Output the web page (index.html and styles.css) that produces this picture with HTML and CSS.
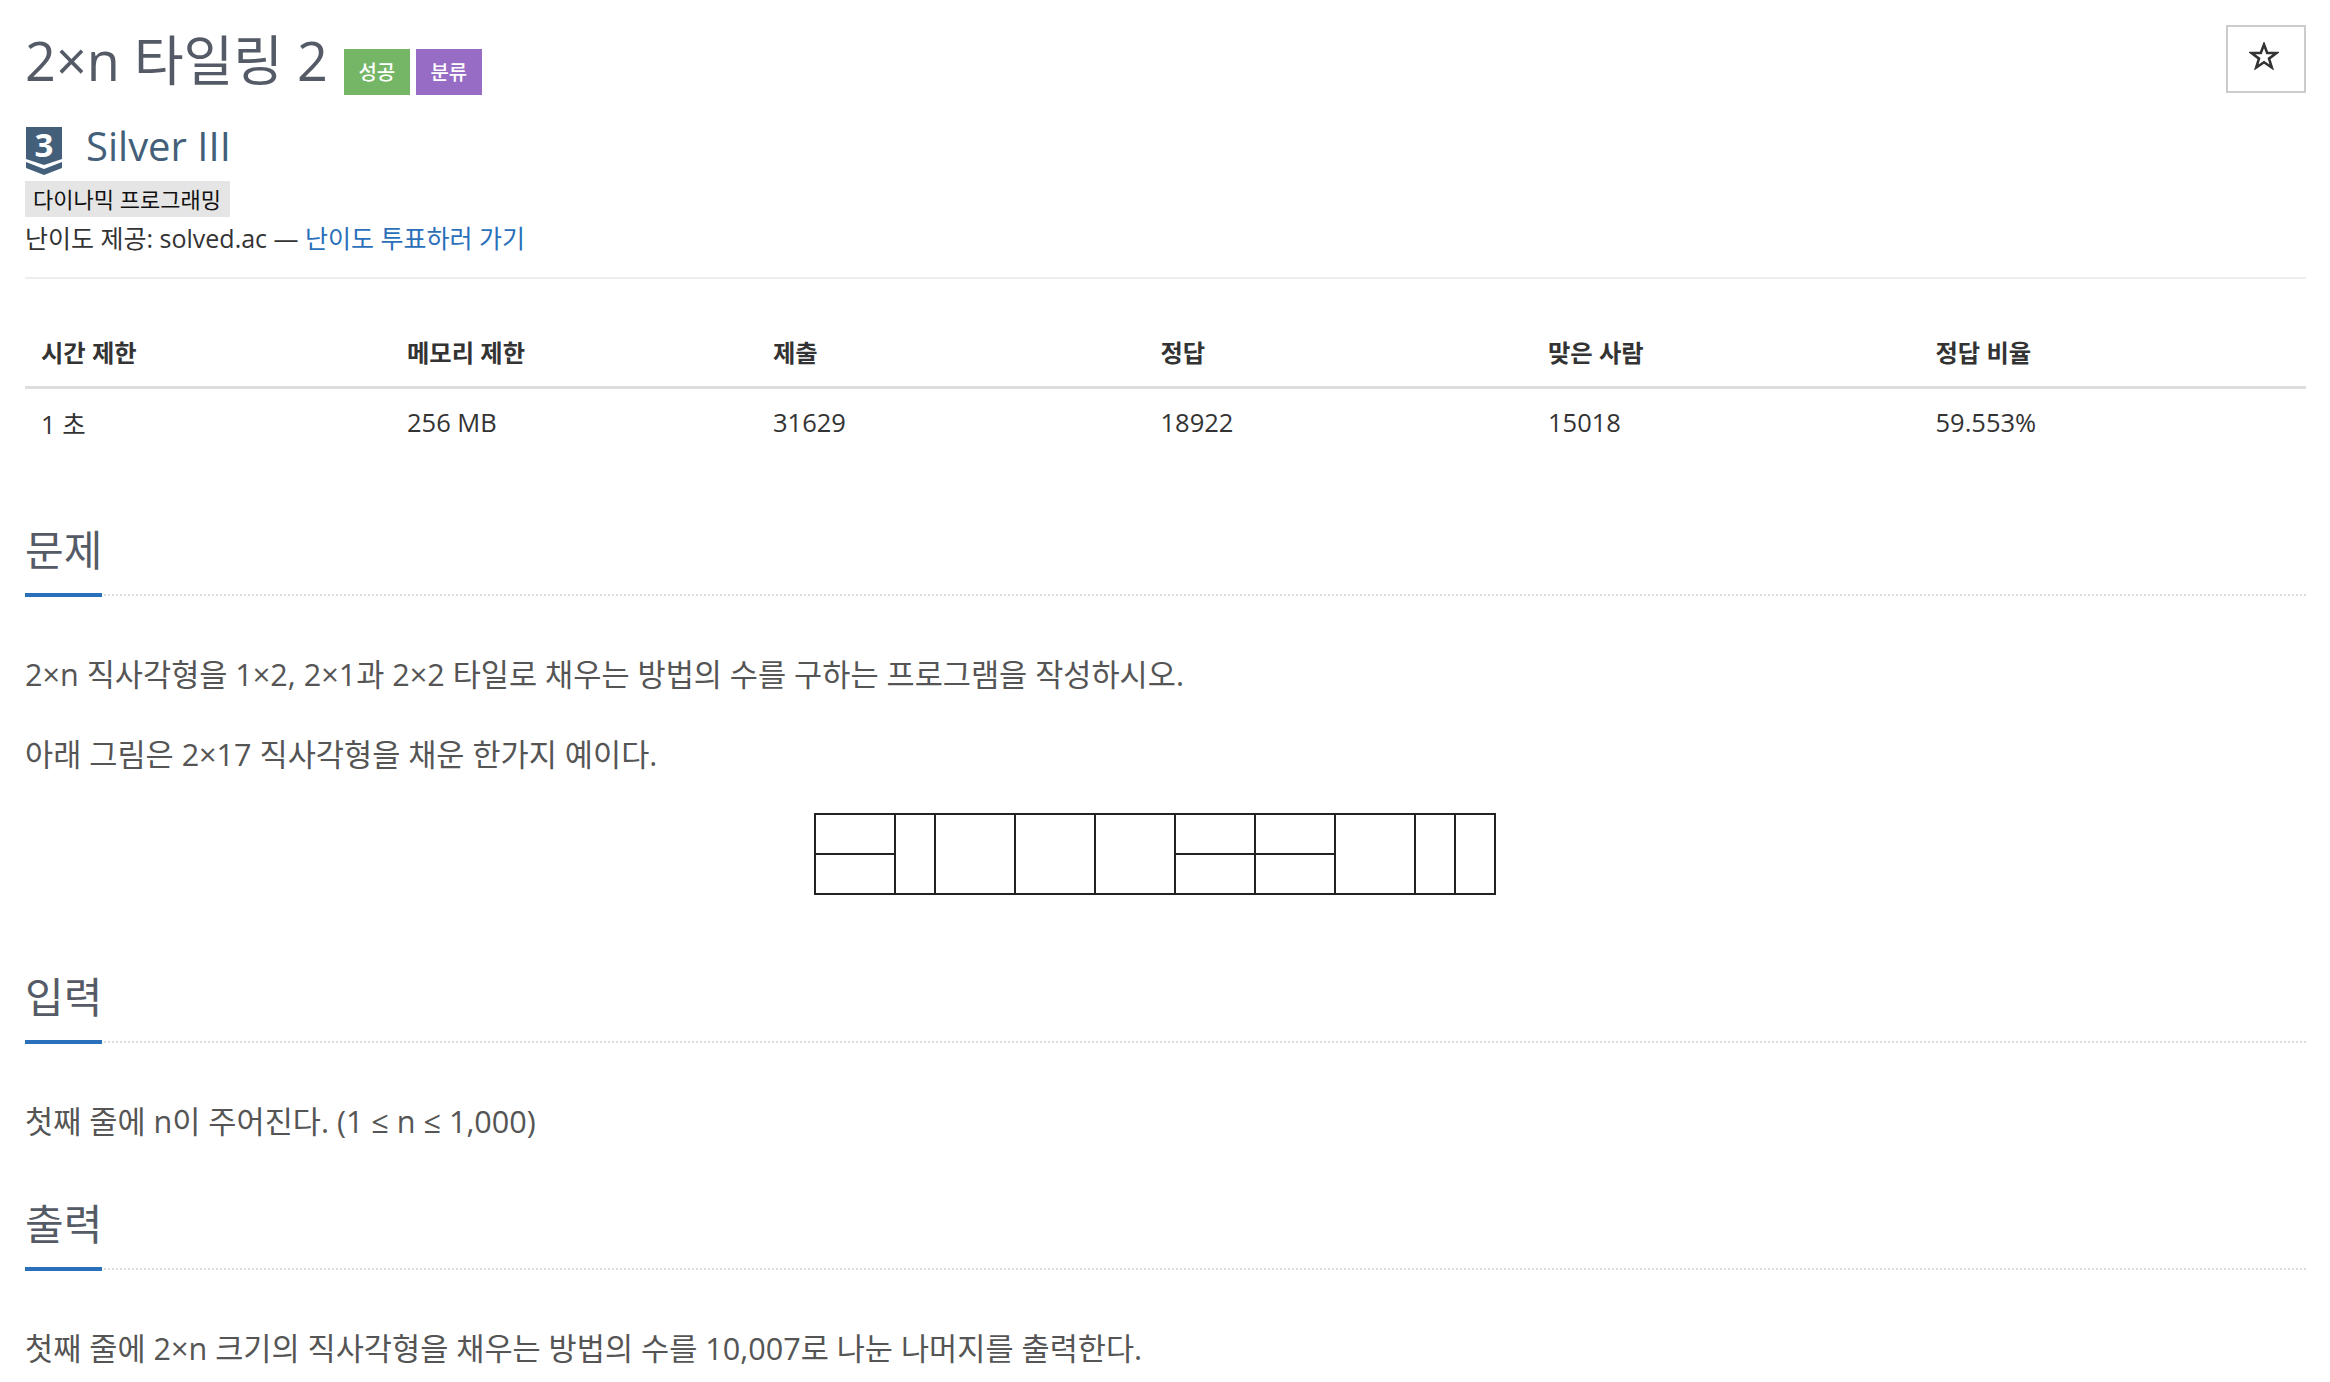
FILE: index.html
```html
<!DOCTYPE html>
<html lang="ko">
<head>
    <meta charset="UTF-8">
    <title>2×n 타일링 2</title>
    <link rel="stylesheet" href="styles.css">
</head>
<body>

<div class="container">
    <div class="page-header">
        <h1>2×n 타일링 2<span class="label label-green">성공</span><span class="label label-purple">분류</span></h1>
        <button class="star-button" type="button" aria-label="즐겨찾기">
            <svg width="30" height="28" viewBox="0 0 30 28">
                <polygon points="15,2.5 18.2,11 27.5,11 20,16.6 22.8,25.5 15,20.2 7.2,25.5 10,16.6 2.5,11 11.8,11" fill="none" stroke="#333" stroke-width="2.6"/>
            </svg>
        </button>
    </div>

    <div class="tier">
        <svg class="tier-icon" width="38" height="50" viewBox="0 0 38 50">
            <path d="M1 0H37V32L19 38L1 32Z" fill="#435f7a"/>
            <path d="M1 35L19 42L37 35V41L19 48L1 41Z" fill="#435f7a"/>
            <text x="19" y="30" text-anchor="middle">3</text>
        </svg>
        <span class="tier-name">Silver III</span>
    </div>
    <div class="tag-row"><span class="tag">다이나믹 프로그래밍</span></div>
    <div class="credit">난이도 제공: solved.ac — <a href="#">난이도 투표하러 가기</a></div>

    <table class="info-table">
        <thead>
        <tr>
            <th class="col-a">시간 제한</th>
            <th class="col-a">메모리 제한</th>
            <th class="col-b">제출</th>
            <th class="col-b">정답</th>
            <th class="col-b">맞은 사람</th>
            <th>정답 비율</th>
        </tr>
        </thead>
        <tbody>
        <tr>
            <td>1 초</td>
            <td>256 MB</td>
            <td>31629</td>
            <td>18922</td>
            <td>15018</td>
            <td>59.553%</td>
        </tr>
        </tbody>
    </table>

    <!-- 문제 -->
    <section class="section section-first">
        <div class="headline"><h2>문제</h2></div>
        <p>2×n 직사각형을 1×2, 2×1과 2×2 타일로 채우는 방법의 수를 구하는 프로그램을 작성하시오.</p>
        <p>아래 그림은 2×17 직사각형을 채운 한가지 예이다.</p>
        <div class="figure">
            <svg width="682" height="82" viewBox="0 0 682 82">
                <g fill="none" stroke="#222" stroke-width="2">
                    <rect x="1" y="1" width="680" height="80"/>
                    <path d="M81 1V81M121 1V81M201 1V81M281 1V81M361 1V81M441 1V81M521 1V81M601 1V81M641 1V81"/>
                    <path d="M1 41H81M361 41H521"/>
                </g>
            </svg>
        </div>
    </section>

    <!-- 입력 -->
    <section class="section">
        <div class="headline"><h2>입력</h2></div>
        <p>첫째 줄에 n이 주어진다. (1 ≤ n ≤ 1,000)</p>
    </section>

    <!-- 출력 -->
    <section class="section">
        <div class="headline"><h2>출력</h2></div>
        <p>첫째 줄에 2×n 크기의 직사각형을 채우는 방법의 수를 10,007로 나눈 나머지를 출력한다.</p>
    </section>
</div>

</body>
</html>
```

FILE: styles.css
```css
body {
    font-family: "Open Sans", "Noto Sans CJK KR", sans-serif;
    background-color: white;
    color: #333;
    margin: 0;
    overflow: hidden;
}

.container {
    padding: 0 24px 0 25px;
}

.page-header {
    display: flex;
    justify-content: space-between;
    align-items: flex-start;
    height: 120px;
}

h1 {
    margin: 25px 0 0;
    font-size: 54px;
    font-weight: 400;
    line-height: 70px;
    color: #555b66;
    white-space: nowrap;
}

.label {
    display: inline-block;
    height: 46px;
    width: 66px;
    margin-left: 6px;
    font-size: 20px;
    font-weight: 500;
    line-height: 48px;
    text-align: center;
    color: white;
    vertical-align: 1px;
}

.label-green {
    background-color: #74b566;
    margin-left: 16px;
}

.label-purple {
    background-color: #966cc4;
}

.star-button {
    width: 80px;
    height: 68px;
    margin-top: 25px;
    padding: 0 4px 4px 0;
    background-color: white;
    border: 2px solid #ccc;
    cursor: pointer;
}

.tier {
    display: flex;
    align-items: flex-start;
    height: 60px;
    margin-top: 7px;
}

.tier-icon {
    overflow: visible;
}

.tier-icon text {
    font-family: "Open Sans", sans-serif;
    font-size: 33px;
    font-weight: 700;
    fill: white;
}

.tier-name {
    margin-left: 23px;
    font-size: 40px;
    line-height: 38px;
    color: #435f7a;
}

.tag-row {
    height: 36px;
    margin-top: -6px;
}

.tag {
    display: inline-block;
    padding: 0 9px 0 8px;
    background-color: #e5e5e5;
    color: #111;
    font-size: 22px;
    line-height: 36px;
}

.credit {
    height: 60px;
    font-size: 25px;
    line-height: 42px;
    border-bottom: 2px solid #eee;
}

.credit a {
    color: #2a6fba;
    text-decoration: none;
}

.info-table {
    width: 100%;
    margin-top: 37px;
    border-collapse: collapse;
    table-layout: fixed;
}

.info-table th,
.info-table td {
    box-sizing: border-box;
    padding: 1px 16px 0;
    text-align: left;
}

.info-table th {
    height: 71px;
    border-bottom: 3px solid #ddd;
    font-weight: 700;
    font-size: 24.3px;
}

.info-table td {
    height: 68px;
    font-size: 25.5px;
}

.col-a {
    width: 366px;
}

.col-b {
    width: 387.5px;
}

.section {
    margin-top: 52px;
}

.section-first {
    margin-top: 64px;
}

.headline {
    border-bottom: 2px dotted #ddd;
    height: 75px;
    margin-bottom: 18px;
}

h2 {
    display: inline-block;
    margin: 0;
    height: 74px;
    border-bottom: 4px solid #2a6fba;
    font-size: 42px;
    font-weight: 400;
    line-height: 62px;
    color: #555b66;
}

p {
    margin: 0;
    padding-top: 40px;
    font-size: 30.6px;
    line-height: 40px;
    color: #555;
}

.figure {
    margin-top: 39px;
    padding-right: 22px;
    padding-bottom: 19px;
    text-align: center;
    line-height: 0;
}
```
